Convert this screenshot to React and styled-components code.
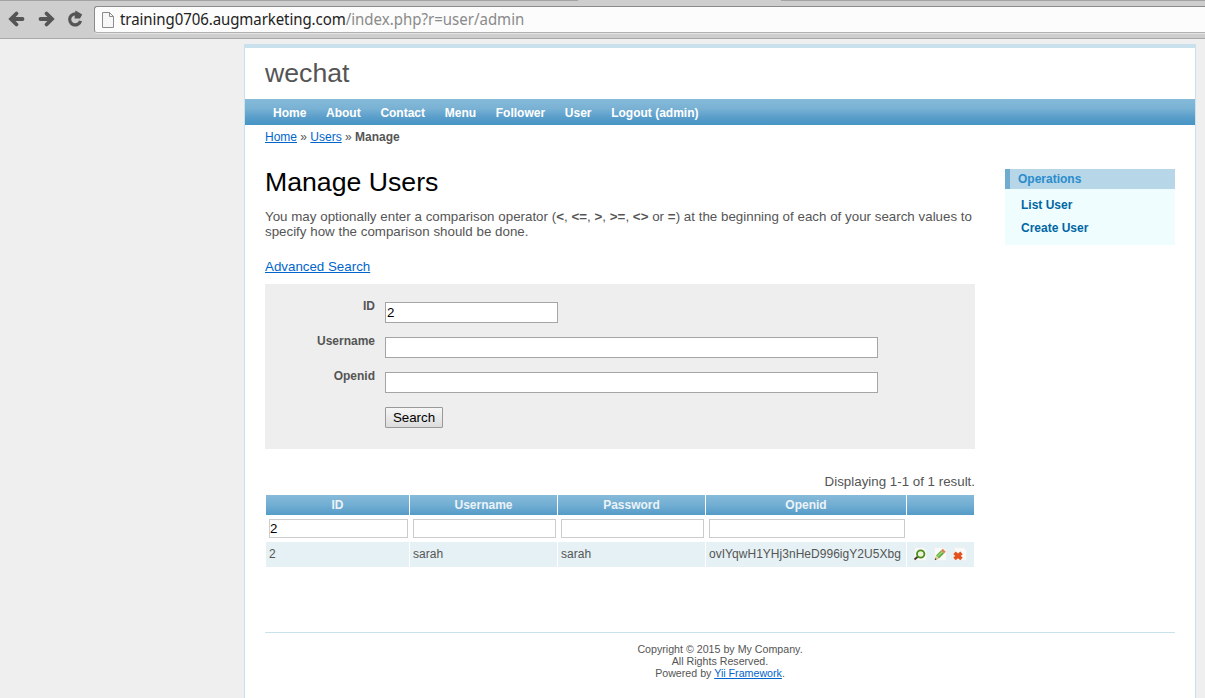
import React from 'react';
import styled, { createGlobalStyle } from 'styled-components';

const Global = createGlobalStyle`
  * { box-sizing: border-box; }
  html { overflow: hidden; }
  body {
    margin: 0;
    height: 698px;
    overflow: hidden;
    background: #efefef;
    color: #555;
    font: 13.333px/15px "Liberation Sans", Arial, sans-serif;
  }
  a { color: #06c; }
`;

const Screen = styled.div`
  display: flex;
  flex-direction: column;
  height: 698px;
`;

const BrowserBar = styled.header`
  display: flex;
  align-items: flex-start;
  flex: none;
  height: 39px;
  padding: 6px 0 0 7px;
  background: #cecece;
  border-bottom: 1px solid #a9a9a9;
  box-shadow: inset 0 1px 0 #a3a3a3;
`;

const BarIcon = styled.svg`
  flex: none;
  width: 20px;
  height: 26px;
  margin-right: 9px;
`;

const TabEdge = styled.div`
  position: absolute;
  top: 0;
  left: 578px;
  width: 203px;
  height: 1px;
  background: #cecece;
`;

const AddressBar = styled.div`
  display: flex;
  align-items: center;
  flex: 1;
  height: 27px;
  padding-left: 7px;
  background: #fcfcfc;
  border: 1px solid #8b8b8b;
  border-bottom-color: #b0b0b0;
  border-right: 0;
  border-radius: 3px 0 0 3px;
  box-shadow: 0 1px 0 #e4e4e4;
  color: #8a8a8a;
  font: 16px/24px "Noto Sans", sans-serif;
  white-space: pre;
`;

const PageIcon = styled.svg`
  width: 12px;
  height: 17px;
  margin: 1px 6px 0 0;
  flex: none;
`;

const Url = styled.span`
  display: block;
  padding-bottom: 2px;
  transform: scaleX(0.938);
  transform-origin: 0 50%;
  b { color: #222; font-weight: 400; letter-spacing: -0.08px; }
`;

const Page = styled.div`
  display: flex;
  flex-direction: column;
  flex: 1;
  width: 952px;
  margin: 5px 0 0 244px;
  background: #fff;
  border: solid #c9e0ed;
  border-width: 4px 1px 0;
`;

const SiteName = styled.div`
  height: 51px;
  padding: 10px 20px 0;
  font-size: 26.667px;
  line-height: 30px;
`;

const Menu = styled.nav`
  display: flex;
  align-items: center;
  gap: 19.7px;
  height: 26px;
  padding: 2px 28px 0;
  background: linear-gradient(#86bad9, #7ab2d4 35%, #5a9ecb 70%, #4595c4);
  a {
    color: #fff;
    font-size: 12px;
    font-weight: bold;
    text-decoration: none;
  }
`;

const Breadcrumbs = styled.div`
  padding: 5px 20px 0;
  height: 44px;
  font-size: 12px;
  line-height: 14px;
`;

const Columns = styled.div`
  display: flex;
  justify-content: space-between;
  height: 463px;
  padding: 0 20px;
`;

const Content = styled.main`
  width: 710px;
`;

const Title = styled.h1`
  margin: 0;
  height: 40px;
  color: #000;
  font-size: 26.667px;
  font-weight: 400;
  line-height: 27px;
`;

const Intro = styled.p`
  margin: 0 0 20px;
  word-spacing: 0.07px;
`;

const SearchForm = styled.form`
  display: flex;
  flex-direction: column;
  gap: 14px;
  height: 165px;
  margin-top: 10px;
  padding: 18px 0 0 20px;
  background: #eee;
`;

const Field = styled.div`
  display: flex;
  gap: 10px;
  height: 21px;
`;

const Label = styled.label`
  width: 90px;
  margin-top: -3px;
  font-size: 12px;
  font-weight: bold;
  text-align: right;
`;

const Input = styled.input`
  width: ${(p) => p.$width};
  height: 21px;
  margin: 0;
  padding: 1px;
  background: #fff;
  border: 1px solid #a5a5a5;
  border-radius: 0;
  color: #000;
  font: 13.333px "Liberation Sans", Arial, sans-serif;
`;

const FilterInput = styled(Input)`
  height: 19px;
  padding: 0;
  border-color: #ccc;
`;

const SearchButton = styled.button`
  width: 58px;
  height: 21px;
  margin-left: 100px;
  padding: 0;
  background: linear-gradient(#f6f6f6, #dcdcdc);
  border: 1px solid #999;
  border-radius: 1px;
  color: #000;
  font: 13.333px "Liberation Sans", Arial, sans-serif;
`;

const Summary = styled.div`
  margin: 25px 0 6px;
  text-align: right;
`;

const Grid = styled.div`
  display: grid;
  grid-template-columns: 143px 147px 147px 200px 67px;
  grid-template-rows: 20px 27px 25px;
  column-gap: 1px;
  margin-left: 1px;
  font-size: 12px;
`;

const HeadCell = styled.div`
  background: linear-gradient(#86bad9, #72aed3 50%, #549bc7);
  color: #ebf3f8;
  font-weight: bold;
  line-height: 20px;
  text-align: center;
`;

const FilterCell = styled.div`
  display: flex;
  align-items: flex-start;
  padding: 4px 1px 0 3px;
`;

const Cell = styled.div`
  display: flex;
  align-items: center;
  padding: 0 3px;
  background: #e5f1f4;
  letter-spacing: 0.03px;
  white-space: nowrap;
`;

const Actions = styled(Cell)`
  gap: 4px;
  padding: 0 0 1px 5px;
`;

const ActionIcon = styled.svg`
  width: 16px;
  height: 16px;
  flex: none;
`;

const Sidebar = styled.aside`
  width: 170px;
  height: 76px;
  background: #effdff;
  font-size: 12px;
  font-weight: bold;
`;

const SidebarTitle = styled.div`
  height: 20px;
  padding-left: 8px;
  background: #b7d6e7;
  border-left: 5px solid #6faccf;
  color: #298dcd;
  line-height: 20px;
`;

const SidebarLinks = styled.div`
  display: flex;
  flex-direction: column;
  gap: 8px;
  padding: 9px 16px;
  a { color: #0066a4; text-decoration: none; }
`;

const Footer = styled.footer`
  margin: 0 20px;
  padding-top: 10px;
  border-top: 1px solid #c9e0ed;
  font-size: 10.667px;
  line-height: 12px;
  text-align: center;
`;

const menuItems = ['Home', 'About', 'Contact', 'Menu', 'Follower', 'User', 'Logout (admin)'];
const fields = [
  { label: 'ID', width: '173px', value: '2' },
  { label: 'Username', width: '493px', value: '' },
  { label: 'Openid', width: '493px', value: '' },
];

function BrowserHeader() {
  return (
    <BrowserBar>
      <TabEdge />
      <BarIcon viewBox="0 0 20 26" fill="none" stroke="#555" strokeWidth="3.8" strokeLinecap="round">
        <path d="M15.5 13H5M9.500 7.500 4 13l5.500 5.500" />
      </BarIcon>
      <BarIcon viewBox="0 0 20 26" fill="none" stroke="#555" strokeWidth="3.8" strokeLinecap="round">
        <path d="M4.500 13H15M10.500 7.500 16 13l-5.500 5.500" />
      </BarIcon>
      <BarIcon viewBox="0 0 20 26">
        <path d="M12.800 8.600A5.500 5.500 0 1 0 15.500 14.800" fill="none" stroke="#555" strokeWidth="3.2" />
        <path d="M10.500 4.600 17.200 8.500 15 12.500H9.500z" fill="#555" />
      </BarIcon>
      <AddressBar>
        <PageIcon viewBox="0 0 12 17">
          <path d="M.5.500h7l4 4v11H.5z" fill="#f7f7f7" stroke="#8b8b8b" />
          <path d="M7.500.500v4h4" fill="none" stroke="#8b8b8b" />
        </PageIcon>
        <Url><b>training0706.augmarketing.com</b>/index.php?r=user/admin</Url>
      </AddressBar>
    </BrowserBar>
  );
}

function Sheet() {
  return <path d="M2.500 1.500h9l3 3v10h-12z" fill="#f8f9f9" stroke="#ecf0f0" />;
}

function RowActions() {
  return (
    <Actions>
      <ActionIcon viewBox="0 0 16 16">
        <Sheet />
        <path d="M6 10.500 2.500 13.500" stroke="#45382b" strokeWidth="2" />
        <circle cx="8.700" cy="8" r="3.700" fill="#e8f4dd" stroke="#4d8c18" strokeWidth="1.800" />
      </ActionIcon>
      <ActionIcon viewBox="0 0 16 16">
        <Sheet />
        <path d="m5.500 11 5-5" stroke="#62ab3c" strokeWidth="4.200" />
        <path d="m5.500 10.500 5-5" stroke="#a6d97d" strokeWidth="1.200" />
        <path d="m10.500 6 1.800-1.800" stroke="#dd8058" strokeWidth="4.200" />
        <path d="m3 13.700.7-3.800 3.200 3.200z" fill="#dfbd7b" />
        <path d="m2.700 14 .5-1.900 1.400 1.400z" fill="#333" />
      </ActionIcon>
      <ActionIcon viewBox="0 0 16 16">
        <Sheet />
        <path d="m2.500 6.800 7 6M9.500 6.800l-7 6" stroke="#e4511f" strokeWidth="3.600" />
      </ActionIcon>
    </Actions>
  );
}

function UserGrid() {
  return (
    <Grid>
      {['ID', 'Username', 'Password', 'Openid', ''].map((h, i) => <HeadCell key={i}>{h}</HeadCell>)}
      {['2', '', '', ''].map((v, i) => (
        <FilterCell key={i}><FilterInput $width="100%" defaultValue={v} /></FilterCell>
      ))}
      <FilterCell />
      {['2', 'sarah', 'sarah', 'ovIYqwH1YHj3nHeD996igY2U5Xbg'].map((v, i) => <Cell key={i}>{v}</Cell>)}
      <RowActions />
    </Grid>
  );
}

export default function App() {
  return (
    <Screen>
      <Global />
      <BrowserHeader />
      <Page>
        <SiteName>wechat</SiteName>
        <Menu>{menuItems.map((m) => <a key={m} href="#">{m}</a>)}</Menu>
        <Breadcrumbs>
          <a href="#">Home</a> » <a href="#">Users</a> » <b>Manage</b>
        </Breadcrumbs>
        <Columns>
          <Content>
            <Title>Manage Users</Title>
            <Intro>
              You may optionally enter a comparison operator (<b>&lt;</b>, <b>&lt;=</b>, <b>&gt;</b>, <b>&gt;=</b>, <b>&lt;&gt;</b> or <b>=</b>) at the beginning of each of your search values to specify how the comparison should be done.
            </Intro>
            <a href="#">Advanced Search</a>
            <SearchForm>
              {fields.map((f) => (
                <Field key={f.label}>
                  <Label>{f.label}</Label>
                  <Input $width={f.width} defaultValue={f.value} />
                </Field>
              ))}
              <SearchButton type="button">Search</SearchButton>
            </SearchForm>
            <Summary>Displaying 1-1 of 1 result.</Summary>
            <UserGrid />
          </Content>
          <Sidebar>
            <SidebarTitle>Operations</SidebarTitle>
            <SidebarLinks>
              <a href="#">List User</a>
              <a href="#">Create User</a>
            </SidebarLinks>
          </Sidebar>
        </Columns>
        <Footer>
          Copyright © 2015 by My Company.<br />
          All Rights Reserved.<br />
          Powered by <a href="#">Yii Framework</a>.
        </Footer>
      </Page>
    </Screen>
  );
}
